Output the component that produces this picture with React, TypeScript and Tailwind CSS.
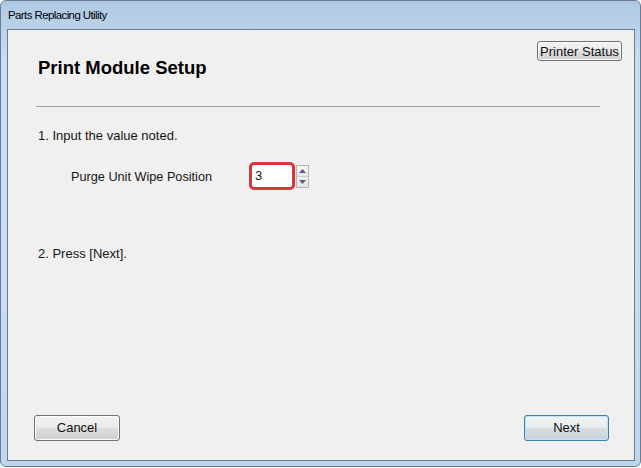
import React from "react";

function WinButton({
  label,
  width,
  height,
  primary,
}: {
  label: string;
  width: string;
  height: string;
  primary?: boolean;
}) {
  return (
    <button
      className={
        primary
          ? `${width} ${height} rounded-[3px] border border-[#3c7fb1] shadow-[inset_0_0_0_1px_#bfe3f7] bg-[linear-gradient(#f1f3f4_0%,#e9ecee_48%,#d8dde1_52%,#cbd2d8_100%)] text-[13px] text-[#111]`
          : `${width} ${height} rounded-[3px] border border-[#707070] shadow-[inset_0_0_0_1px_#fcfcfc] bg-[linear-gradient(#f2f2f2_0%,#ebebeb_48%,#dddddd_52%,#cfcfcf_100%)] text-[13px] text-[#111]`
      }
    >
      {label}
    </button>
  );
}

function Spinner() {
  return (
    <div className="ml-[1px] flex h-[23px] w-[13px] flex-col border border-[#b5b5b5] bg-[#f4f4f4]">
      <div className="flex flex-1 items-center justify-center border-b border-[#cfcfcf] bg-[linear-gradient(#f7f7f7,#e6e6e6)]">
        <svg width="7" height="4" viewBox="0 0 7 4">
          <path d="M0 4 L3.5 0 L7 4 Z" fill="#4d6185" />
        </svg>
      </div>
      <div className="flex flex-1 items-center justify-center bg-[linear-gradient(#f1f1f1,#e2e2e2)]">
        <svg width="7" height="4" viewBox="0 0 7 4">
          <path d="M0 0 L7 0 L3.5 4 Z" fill="#4d6185" />
        </svg>
      </div>
    </div>
  );
}

export default function App() {
  return (
    <div className="h-[468px] w-[641px] overflow-hidden bg-white font-['Liberation_Sans',Arial,sans-serif] text-[#151515]">
      {/* Window frame */}
      <div className="flex h-[467px] w-[641px] flex-col rounded-t-[6px] rounded-b-[6px] border border-[#6a7d95] bg-[linear-gradient(180deg,#afc9e3_0%,#c5dcf2_12%,#c8ddf2_60%,#bed6ee_100%)]">
        {/* Title bar */}
        <div className="flex h-[28px] shrink-0 items-center pl-[7px] pt-[1px] text-[11.5px] tracking-[-0.6px] text-black">
          Parts Replacing Utility
        </div>

        {/* Client area */}
        <div className="ml-[6px] flex h-[432px] w-[628px] flex-col border border-[#6b7a8c] bg-[#f0f0f0]">
          <div className="flex items-start justify-between pl-[30px] pr-[12px] pt-[11px]">
            <h1 className="mt-[16px] text-[18.5px] font-bold leading-[22px] text-black">
              Print Module Setup
            </h1>
            <WinButton label="Printer Status" width="w-[85px]" height="h-[20px]" />
          </div>

          <div className="ml-[28px] mt-[27px] h-px w-[564px] bg-[#a0a0a0]" />

          <p className="ml-[30px] mt-[21px] text-[13px] leading-[16px]">
            1. Input the value noted.
          </p>

          <div className="ml-[63px] mt-[18px] flex items-center">
            <span className="w-[178px] pt-[2px] text-[12.7px] leading-[16px]">
              Purge Unit Wipe Position
            </span>
            <div className="flex h-[28px] w-[46px] items-center rounded-[5px] border-[3px] border-[#d8363f] bg-white pl-[3px] text-[13px]">
              3
            </div>
            <Spinner />
          </div>

          <p className="ml-[30px] mt-[56px] text-[13px] leading-[16px]">
            2. Press [Next].
          </p>

          <div className="flex-1" />

          <div className="flex items-center justify-between pb-[19px] pl-[26px] pr-[25px]">
            <WinButton label="Cancel" width="w-[86px]" height="h-[26px]" />
            <WinButton label="Next" width="w-[85px]" height="h-[26px]" primary />
          </div>
        </div>
      </div>
    </div>
  );
}
